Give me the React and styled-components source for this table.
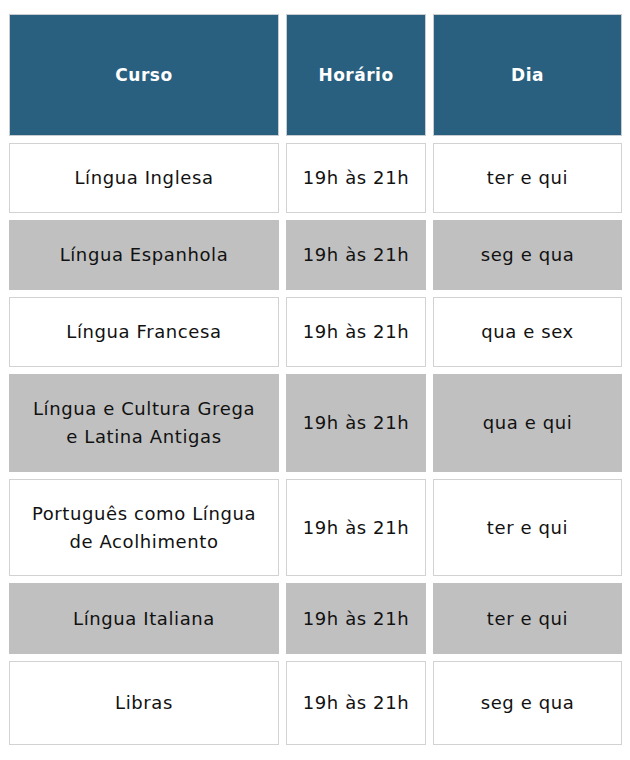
import React from "react";
import styled, { createGlobalStyle } from "styled-components";

const Global = createGlobalStyle`
  html, body { margin: 0; padding: 0; background: #ffffff; }
  body { font-family: "DejaVu Sans", "Liberation Sans", sans-serif; }
`;

const Wrap = styled.div`
  padding: 7px 0 0 2px;
`;

const Table = styled.table`
  border-collapse: separate;
  border-spacing: 7px;
  table-layout: fixed;
  width: 627px;
  font-family: "DejaVu Sans", "Liberation Sans", sans-serif;
`;

const Col = styled.col`
  width: ${(p) => p.$w}px;
`;

const Th = styled.th`
  height: 122px;
  box-sizing: border-box;
  background: #29607f;
  border: 1px solid #c8ccd0;
  color: #ffffff;
  font-size: 17px;
  font-weight: 600;
  letter-spacing: 0.5px;
  text-align: center;
  vertical-align: middle;
  padding: 0 6px;
`;

const Td = styled.td`
  height: ${(p) => p.$h}px;
  background: ${(p) => (p.$alt ? "#c0c0c0" : "#ffffff")};
  border: 1px solid ${(p) => (p.$alt ? "#c0c0c0" : "#d2d2d2")};
  color: #111111;
  font-size: 18px;
  letter-spacing: 0.6px;
  line-height: 28px;
  text-align: center;
  vertical-align: middle;
  padding: 0 ${(p) => (p.$wide ? 17 : 4)}px;
  white-space: ${(p) => (p.$wide ? "normal" : "nowrap")};
  box-sizing: border-box;
`;

const rows = [
  { curso: "Língua Inglesa", dia: "ter e qui", h: 70 },
  { curso: "Língua Espanhola", dia: "seg e qua", h: 70 },
  { curso: "Língua Francesa", dia: "qua e sex", h: 70 },
  { curso: "Língua e Cultura Grega e Latina Antigas", dia: "qua e qui", h: 98 },
  { curso: "Português como Língua de Acolhimento", dia: "ter e qui", h: 97 },
  { curso: "Língua Italiana", dia: "ter e qui", h: 71 },
  { curso: "Libras", dia: "seg e qua", h: 84 },
];

export default function App() {
  return (
    <Wrap>
      <Global />
      <Table>
        <colgroup>
          <Col $w={270} />
          <Col $w={140} />
          <Col $w={189} />
        </colgroup>
        <thead>
          <tr>
            <Th>Curso</Th>
            <Th>Horário</Th>
            <Th>Dia</Th>
          </tr>
        </thead>
        <tbody>
          {rows.map((r, i) => (
            <tr key={r.curso}>
              <Td $h={r.h} $alt={i % 2 === 1} $wide>{r.curso}</Td>
              <Td $h={r.h} $alt={i % 2 === 1}>19h às 21h</Td>
              <Td $h={r.h} $alt={i % 2 === 1}>{r.dia}</Td>
            </tr>
          ))}
        </tbody>
      </Table>
    </Wrap>
  );
}
